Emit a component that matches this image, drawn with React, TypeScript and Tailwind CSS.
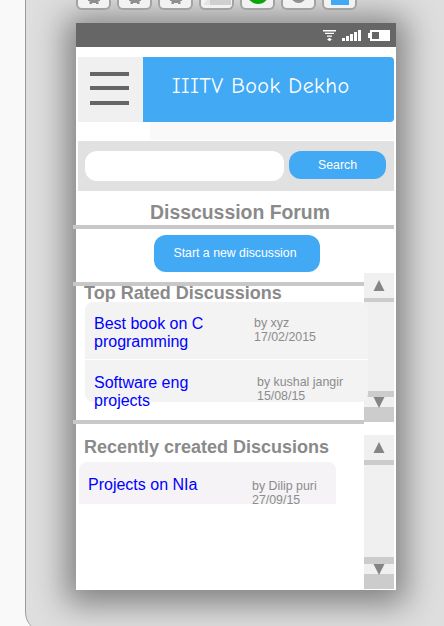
import React from 'react';

const helv = "font-['Liberation_Sans',Arial,sans-serif]";

const Btn = ({ children }: { children: React.ReactNode }) => (
  <div className="flex h-[10px] w-[35px] items-start justify-center overflow-hidden rounded-b-[6px] border-2 border-t-0 border-[#a3a3a3] bg-[#f2f2f2]">
    {children}
  </div>
);

const Gear = () => (
  <Btn>
    <svg width="16" height="5" viewBox="0 0 16 5">
      <path d="M2 0h12v1h-1.5v3H10V3H6v1H3.5V1H2z" fill="#8f8f8f" />
    </svg>
  </Btn>
);

const Toolbar = () => (
  <div className="flex h-[10px] gap-[6px] pl-[76px]">
    <Gear />
    <Gear />
    <Gear />
    <Btn>
      <svg width="29" height="6" viewBox="0 0 29 6">
        <path d="M5 0h3v5H1z" fill="#e4e4e4" />
        <path d="M8 0h21v5H8z" fill="#cfcfcf" />
      </svg>
    </Btn>
    <Btn>
      <div className="-mt-[18px] h-[22px] w-[22px] shrink-0 rounded-full bg-[#0aa70a]" />
    </Btn>
    <Btn>
      <div className="-mt-[12px] h-[15px] w-[15px] shrink-0 rounded-full bg-[#8f8f8f]" />
    </Btn>
    <Btn>
      <div className="h-[5px] w-[18px] bg-[#42a9f4]" />
    </Btn>
  </div>
);

const StatusBar = () => (
  <div className="flex h-[24px] items-center justify-end bg-[#666667] pr-[6px]">
    <svg width="13" height="11" viewBox="0 0 13 11" className="mr-[6px]">
      <path d="M0 0h13v1.4H0zM2 2.7h9v1.4H2zM4 5.4h5v1.4H4zM5.5 8h2v1h1v1h-1v1h-2v-1h-1V9h1z" fill="#fff" />
    </svg>
    <svg width="19" height="11" viewBox="0 0 19 11" className="mr-[7px]">
      <path d="M0 8h3v3H0zM4 6h3v5H4zM8 4h3v7H8zM12 2h3v9h-3zM16 0h3v11h-3z" fill="#fff" />
    </svg>
    <svg width="22" height="11" viewBox="0 0 22 11">
      <path fillRule="evenodd" d="M2 0h20v11H2V8H0V3h2zM4 2v7h7V2z" fill="#fff" />
    </svg>
  </div>
);

const Scrollbar = ({ h, topBar, lowBar }: { h: string; topBar: string; lowBar: string }) => (
  <div className={`flex w-[30px] flex-col bg-[#f0f0f0] ${h}`}>
    <div className="flex h-[25px] items-center justify-center">
      <svg width="12" height="11" viewBox="0 0 12 11"><path d="M6 0l5.5 11H.5z" fill="#858585" /></svg>
    </div>
    <div className={`${topBar} bg-[#cccccc]`} />
    <div className="flex-1" />
    <div className={`${lowBar} bg-[#cccccc]`} />
    <div className="flex h-[10px] items-start justify-center overflow-visible">
      <svg width="12" height="11" viewBox="0 0 12 11" className="relative z-10"><path d="M.5 0h11L6 11z" fill="#858585" /></svg>
    </div>
    <div className="h-[15px] bg-[#cccccc]" />
  </div>
);

const Row = ({ title, by, date, metaPl, metaTop }: { title: React.ReactNode; by: string; date: string; metaPl: string; metaTop: string }) => (
  <div className="flex">
    <div className="w-[160px] text-[16px] leading-[18px] text-[#0000ff]">{title}</div>
    <div className={`${metaPl} ${metaTop} text-[12.4px] leading-[14px] text-[#8c8c8c]`}>
      <div>{by}</div>
      <div>{date}</div>
    </div>
  </div>
);

export default function App() {
  return (
    <div className={`${helv} relative h-[626px] w-[444px] overflow-hidden bg-[#f9f9f9]`}>
      {/* grey workspace behind the phone, its corner shows at bottom left */}
      <div className="absolute left-[25px] top-0 h-[632px] w-[430px] rounded-bl-[20px] border-l border-[#9a9a9a] bg-[#dedede]" />
      <div className="relative">
        <Toolbar />
        <div className="ml-[76px] mt-[13px] h-[567px] w-[320px] bg-white shadow-[0_4px_30px_10px_rgba(0,0,0,0.42)]">
          <StatusBar />
          <div className="px-[2px] pt-[10px]">
            <div className="flex h-[65px]">
              <div className="flex w-[65px] flex-col items-center bg-[#f0f0f0] pr-[2px] pt-[15px]">
                <div className="h-[4px] w-[39px] bg-[#666666]" />
                <div className="mt-[10px] h-[4px] w-[39px] bg-[#666666]" />
                <div className="mt-[11px] h-[4px] w-[39px] bg-[#666666]" />
              </div>
              <div className="flex-1 rounded-r-[4px] bg-[#42a9f4] pl-[29px] pt-[17px] font-['Comic_Neue','Comic_Sans_MS','DejaVu_Sans',sans-serif] text-[22px] leading-[24px] tracking-[0.45px] text-white">
                IIITV Book Dekho
              </div>
            </div>
            <div className="ml-[72px] h-[18px] bg-[#f9f9f9]" />
            <div className="mt-px flex h-[50px] items-start gap-[5px] bg-[#e1e1e1] pl-[7px] pt-[10px]">
              <div className="h-[30px] w-[199px] rounded-[12px] bg-white" />
              <div className="flex h-[28px] w-[97px] items-center justify-center rounded-[12px] bg-[#42a9f4] text-[12.3px] text-white">Search</div>
            </div>
            <div className="mt-[10px] pl-[8px] text-center text-[19.4px] font-bold leading-[22px] text-[#8a8a8a]">
              Disscussion Forum
            </div>
            <div className="-ml-[5px] mt-[2px] h-[4px] bg-[#c8c8c8]" />
            <div className="ml-[76px] mt-[6px] flex h-[37px] w-[166px] items-center justify-center rounded-[12px] bg-[#42a9f4] pr-[4px] text-[12.3px] text-white">
              Start a new discussion
            </div>

            <div className="relative mt-px flex h-[149px]">
              <div className="relative flex-1 overflow-visible">
                <div className="-ml-[5px] mt-[9px] h-[4px] bg-[#c8c8c8]" />
                <div className="absolute left-[6px] top-[10px] text-[18px] font-bold leading-[20px] text-[#8a8a8a]">Top Rated Discussions</div>
                <div className="absolute left-[7px] top-[29px] h-[100px] w-[283px] rounded-[8px] bg-[#f3f3f3]">
                  <div className="h-[58px] border-b border-white pl-[9px] pt-[13px]">
                    <Row title={<>Best book on C<br />programming</>} by="by xyz" date="17/02/2015" metaPl="pl-0" metaTop="pt-[1px]" />
                  </div>
                  <div className="pl-[9px] pt-[14px]">
                    <Row title={<>Software eng<br />projects</>} by="by kushal jangir" date="15/08/15" metaPl="pl-[3px]" metaTop="pt-[1px]" />
                  </div>
                </div>
                <div className="absolute -bottom-[2px] -left-[5px] h-[4px] w-[291px] bg-[#c8c8c8]" />
              </div>
              <Scrollbar h="h-[149px]" topBar="h-[4px]" lowBar="h-[6px]" />
            </div>

            <div className="mt-[13px] flex h-[154px]">
              <div className="relative flex-1">
                <div className="pl-[6px] pt-[2px] text-[18px] font-bold leading-[20px] text-[#8a8a8a]">Recently created Discusions</div>
                <div className="ml-px mt-[5px] h-[42px] w-[257px] overflow-hidden rounded-t-[8px] bg-[#f5f3f5] pl-[9px] pt-[14px]">
                  <Row title="Projects on NIa" by="by Dilip puri" date="27/09/15" metaPl="pl-[4px]" metaTop="pt-[3px]" />
                </div>
              </div>
              <Scrollbar h="h-[154px]" topBar="h-[5px]" lowBar="h-[7px]" />
            </div>
          </div>
        </div>
      </div>
    </div>
  );
}
